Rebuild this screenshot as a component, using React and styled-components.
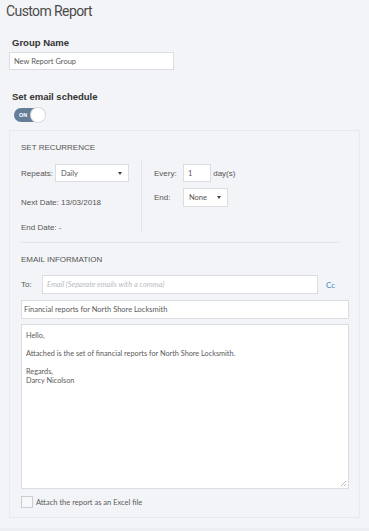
import React from 'react'
import styled, { createGlobalStyle } from 'styled-components'

const GlobalStyle = createGlobalStyle`
  html, body {
    margin: 0;
    padding: 0;
    background: #eceef2;
  }
  body {
    font-family: "Liberation Sans", Arial, sans-serif;
    color: #555;
  }
`

const Page = styled.div`
  width: 369px;
  height: 528px;
  background: #f3f4f7;
  box-sizing: border-box;
  padding: 3px 9px 0 9px;
`

const Title = styled.h1`
  margin: 0 0 0 -3px;
  font-family: Roboto, "Open Sans", sans-serif;
  font-weight: 400;
  font-size: 14px;
  line-height: 16px;
  color: #4b4b4b;
  letter-spacing: -0.6px;
`

const FieldLabel = styled.div`
  margin: ${p => p.top}px 0 0 3px;
  font-family: "Liberation Sans", Arial, sans-serif;
  font-weight: 700;
  font-size: 9.5px;
  line-height: 11px;
  color: #333;
`

const TextInput = styled.div`
  box-sizing: border-box;
  width: ${p => p.width || 'auto'};
  height: ${p => p.height || 18}px;
  margin-top: ${p => p.top || 0}px;
  background: #fff;
  border: 1px solid #dcdde1;
  padding: 0 ${p => (p.pad !== undefined ? p.pad : 4)}px;
  display: flex;
  align-items: center;
  font-family: Lato, "Open Sans", sans-serif;
  font-size: 7.5px;
  color: ${p => (p.placeholder ? '#b9bcc4' : '#5a5a5a')};
  font-style: ${p => (p.placeholder ? 'italic' : 'normal')};
  flex: ${p => (p.grow ? 1 : 'none')};
`

const Toggle = styled.div`
  margin: 6px 0 0 5px;
  width: 31px;
  height: 14px;
  border-radius: 7px;
  background: #647d99;
  position: relative;
  display: flex;
  align-items: center;
  padding-left: 5px;
  box-sizing: border-box;
  font-family: "Liberation Sans", Arial, sans-serif;
  font-weight: 700;
  font-size: 5.5px;
  color: #fff;
  &::after {
    content: '';
    position: absolute;
    right: 0;
    top: 0;
    width: 14px;
    height: 14px;
    border-radius: 50%;
    background: #fff;
    box-shadow: 0 0 0 1px #d7dbe1;
  }
`

const Panel = styled.div`
  margin-top: 8px;
  height: 388px;
  box-sizing: border-box;
  border: 1px solid #e7e9ed;
  background: #f3f4f7;
  padding: 12px 10px 0 11px;
`

const SectionTitle = styled.div`
  font-size: 8px;
  line-height: 10px;
  color: #555;
  text-transform: uppercase;
`

const Recurrence = styled.div`
  display: flex;
  margin-top: 7px;
  width: 318px;
  padding-bottom: 10px;
  border-bottom: 1px solid #e3e5e9;
`

const RecurCol = styled.div`
  display: flex;
  flex-direction: column;
  width: ${p => p.width}px;
  padding-left: ${p => p.pad || 0}px;
  border-left: ${p => (p.divided ? '1px solid #e3e5e9' : 'none')};
  height: 72px;
`

const Row = styled.div`
  display: flex;
  align-items: center;
  gap: ${p => p.gap || 0}px;
  margin-top: ${p => p.top || 0}px;
  font-size: 8px;
  color: #555;
`

const Label = styled.span`
  width: ${p => (p.width ? p.width + 'px' : 'auto')};
  font-size: 8px;
  color: #555;
`

const Select = styled.div`
  box-sizing: border-box;
  width: ${p => p.width}px;
  height: ${p => p.height || 18}px;
  background: #fff;
  border: 1px solid #dcdde1;
  display: flex;
  align-items: center;
  justify-content: space-between;
  padding: 0 6px 0 5px;
  font-family: Lato, "Open Sans", sans-serif;
  font-size: 7.5px;
  color: #555;
  &::after {
    content: '';
    border-left: 2.5px solid transparent;
    border-right: 2.5px solid transparent;
    border-top: 3px solid #444;
  }
`

const PlainText = styled.div`
  font-size: 8px;
  color: #555;
  margin-top: ${p => p.top}px;
`

const EmailBlock = styled.div`
  margin-top: 12px;
`

const CcLink = styled.span`
  font-family: Lato, "Open Sans", sans-serif;
  font-size: 8px;
  color: #3e87c8;
  margin-left: 8px;
`

const Body = styled.div`
  box-sizing: border-box;
  margin-top: 5px;
  height: 165px;
  background: #fff;
  border: 1px solid #dcdde1;
  padding: 6px 4px;
  font-family: Lato, "Open Sans", sans-serif;
  font-size: 7.3px;
  line-height: 9px;
  color: #5a5a5a;
  position: relative;
  p {
    margin: 0 0 9px 0;
  }
`

const Grip = styled.svg`
  position: absolute;
  right: 1px;
  bottom: 1px;
`

const CheckRow = styled.div`
  display: flex;
  align-items: center;
  gap: 3px;
  margin-top: 7px;
  font-family: Lato, "Open Sans", sans-serif;
  font-size: 7.5px;
  color: #5a5a5a;
`

const CheckBox = styled.span`
  box-sizing: border-box;
  width: 12px;
  height: 12px;
  border: 1px solid #c9ccd2;
  background: #f7f8fa;
`

const App = () => {
  return (
    <>
      <GlobalStyle />
      <Page>
        <Title>Custom Report</Title>
        <FieldLabel top={18}>Group Name</FieldLabel>
        <TextInput width="165px" top={4}>New Report Group</TextInput>
        <FieldLabel top={21}>Set email schedule</FieldLabel>
        <Toggle>ON</Toggle>
        <Panel>
          <SectionTitle>Set Recurrence</SectionTitle>
          <Recurrence>
            <RecurCol width={120}>
              <Row gap={2} top={4}>
                <Label>Repeats:</Label>
                <Select width={74}>Daily</Select>
              </Row>
              <PlainText top={16}>Next Date: 13/03/2018</PlainText>
              <PlainText top={16}>End Date: -</PlainText>
            </RecurCol>
            <RecurCol width={180} divided pad={12}>
              <Row top={4}>
                <Label width={29}>Every:</Label>
                <TextInput width="28px">1</TextInput>
                <Label>&nbsp;day(s)</Label>
              </Row>
              <Row top={6}>
                <Label width={29}>End:</Label>
                <Select width={45} height={19}>None</Select>
              </Row>
            </RecurCol>
          </Recurrence>
          <EmailBlock>
            <SectionTitle>Email Information</SectionTitle>
            <Row top={10}>
              <Label width={21}>To:</Label>
              <TextInput placeholder grow height={19} style={{ maxWidth: 276 }}>
                Email (Separate emails with a comma)
              </TextInput>
              <CcLink>Cc</CcLink>
            </Row>
            <TextInput top={6} height={19} pad={2}>Financial reports for North Shore Locksmith</TextInput>
            <Body>
              <p>Hello,</p>
              <p>Attached is the set of financial reports for North Shore Locksmith.</p>
              <p>Regards,<br />Darcy Nicolson</p>
              <Grip width="7" height="7" viewBox="0 0 7 7">
                <path d="M6 1 L1 6 M6 4 L4 6" stroke="#aaa" strokeWidth="0.8" />
              </Grip>
            </Body>
            <CheckRow>
              <CheckBox />
              Attach the report as an Excel file
            </CheckRow>
          </EmailBlock>
        </Panel>
      </Page>
    </>
  )
}

export default App
